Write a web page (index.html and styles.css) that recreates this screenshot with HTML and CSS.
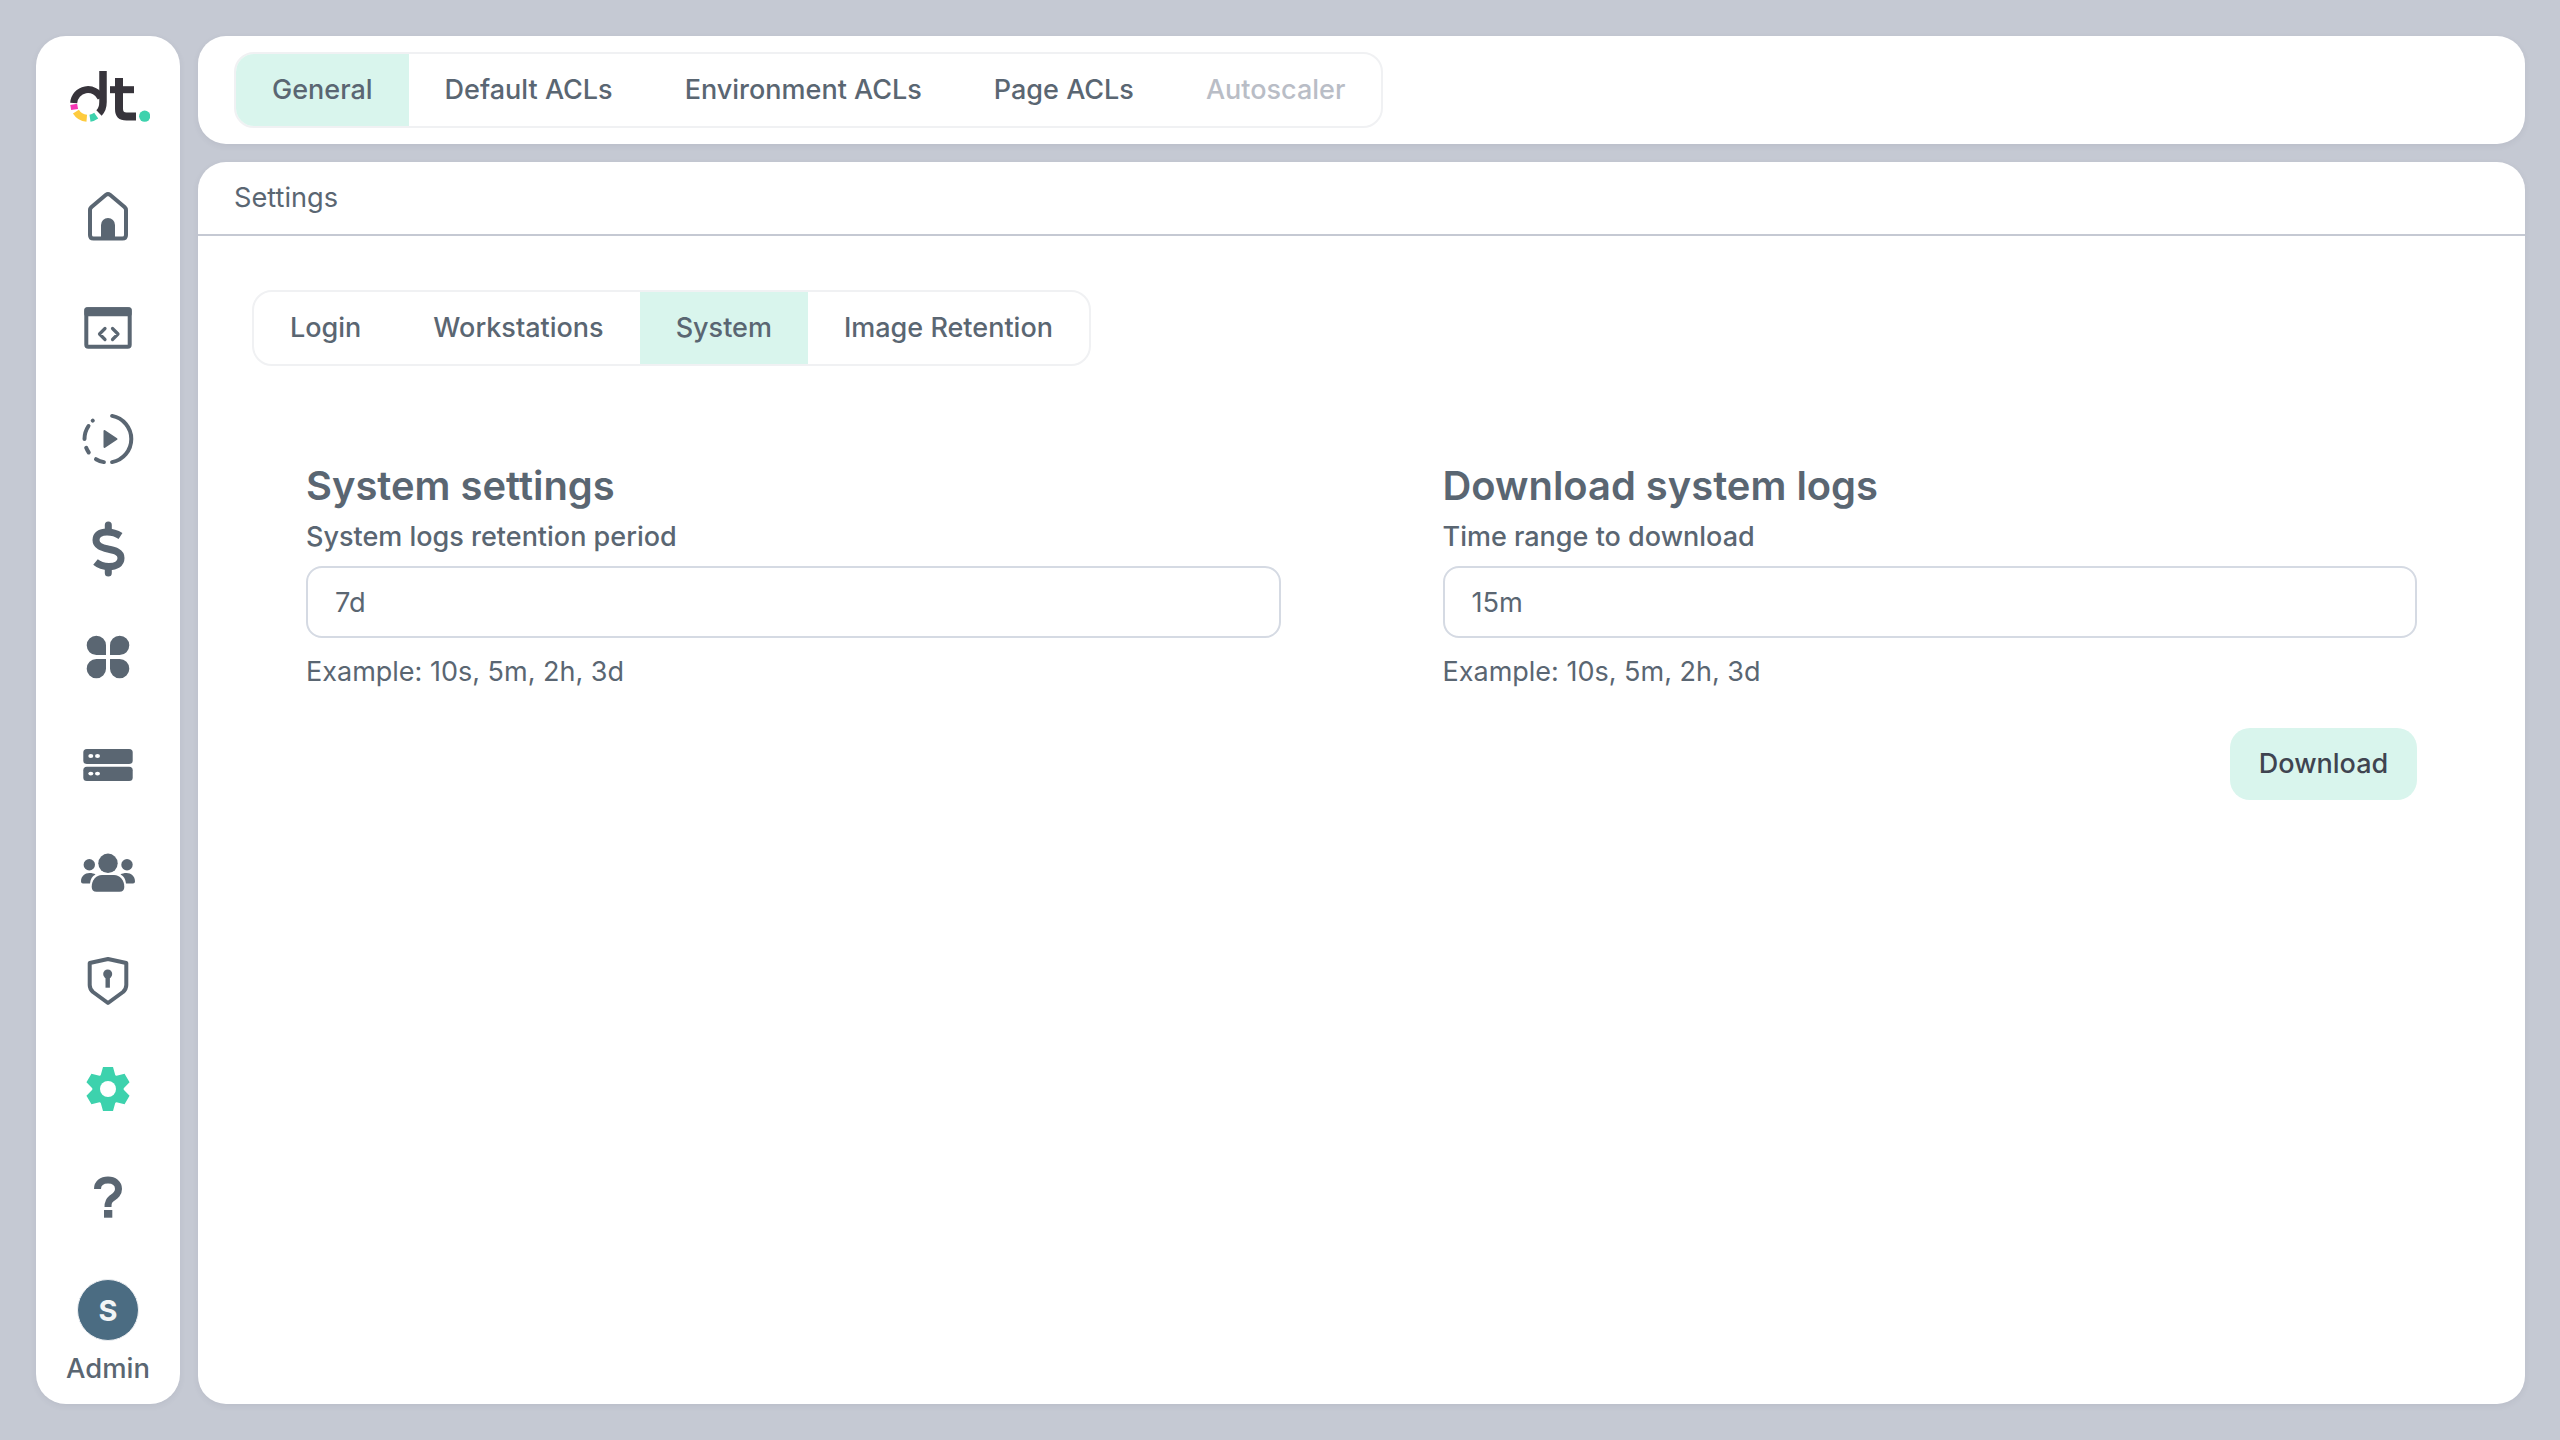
FILE: index.html
```
<!DOCTYPE html>
<html lang="en">
<head>
<meta charset="utf-8">
<title>Settings</title>
<link rel="stylesheet" href="styles.css">
</head>
<body>
<div class="app">
  <aside class="sidebar">
    <div class="logo">
      <svg width="84" height="60" viewBox="-2 0 84 60">
        <g fill="none" stroke-width="7">
          <path d="M5.700 35 A14.300 14.300 0 0 1 33 30" stroke="#37343b"/>
          <path d="M35 3 V34 Q35 41 31 45" stroke="#37343b" stroke-width="7.500"/>
          <path d="M5.700 36.300 L6.600 41.500" stroke="#f536b4"/>
          <path d="M7.900 43.600 A14.300 14.300 0 0 0 18.750 50.250" stroke="#fecb3e"/>
          <path d="M22 50.200 A14.300 14.300 0 0 0 28.200 47.700" stroke="#3dd2ad"/>
          <path d="M51 10 V41 Q51 48.500 58.500 48.500 H68" stroke="#37343b" stroke-width="8"/>
          <path d="M42 21.700 H66" stroke="#37343b"/>
        </g>
        <circle cx="76.700" cy="48.200" r="5.600" fill="#3dd2ad"/>
      </svg>
    </div>
    <nav class="nav">
      <a class="nav-item gap-4"><svg class="icon" viewBox="0 0 56 56"><path class="line" d="M10 22 Q10 20.500 11.500 19 L26 6.800 Q28 5.300 30 6.800 L44.500 19 Q46 20.500 46 22 V47 Q46 50.500 42.500 50.500 H13.500 Q10 50.500 10 47 Z"/><path class="solid" d="M21 50 V37 a7 7 0 0 1 14 0 V50 Z"/></svg></a>
      <a class="nav-item gap-3"><svg class="icon" viewBox="0 0 56 56"><rect class="line" x="6.300" y="9.300" width="43.400" height="37.400" rx="2"/><rect class="solid" x="4.300" y="7.300" width="47.400" height="9" rx="2.500"/><path class="line thin" d="M25 28.500 L19.500 34 L25 39.500 M32.500 28.500 L38 34 L32.500 39.500"/></svg></a>
      <a class="nav-item gap-2"><svg class="icon" viewBox="0 0 56 56"><path class="line round" d="M32.100 4.900 A23.500 23.500 0 0 1 32.100 51.100 M23.900 51.100 A23.500 23.500 0 0 1 16 48.200 M8.750 41.500 A23.500 23.500 0 0 1 6.200 36.800 M4.500 28 A23.500 23.500 0 0 1 8.500 15 M12.700 9.700 L12.800 9.600"/><path class="solid rounded" d="M24.500 20 L36.500 28 L24.500 36 Z"/></svg></a>
      <a class="nav-item"><svg class="icon" viewBox="0 0 56 56"><path class="line bold" d="M40.500 15 C36 12 31 11 27 11 C20 11 16 14 16 19 C16 25 22 26.500 28 28 C35 29.500 41 31 41 37 C41 43 36 45.500 29 45.500 C24 45.500 19 44 15.500 41"/><path class="line bold capround" d="M28.300 4 V10 M28.300 46 V52"/></svg></a>
      <a class="nav-item"><svg class="icon" viewBox="0 0 56 56"><path class="solid" d="M26 26 V16.350 A9.650 9.650 0 1 0 16.350 26 Z M30 26 H39.650 A9.650 9.650 0 1 0 30 16.350 Z M26 30 H16.350 A9.650 9.650 0 1 0 26 39.650 Z M30 30 V39.650 A9.650 9.650 0 1 0 39.650 30 Z"/></svg></a>
      <a class="nav-item"><svg class="icon" viewBox="0 0 56 56"><rect class="solid" x="3.300" y="12" width="49.400" height="15" rx="3.500"/><rect class="solid" x="3.300" y="29.700" width="49.400" height="14.300" rx="3.500"/><g class="holes"><ellipse cx="10.800" cy="19" rx="2.500" ry="1.900"/><ellipse cx="17.500" cy="19" rx="2.500" ry="1.900"/><ellipse cx="10.800" cy="36.600" rx="2.500" ry="1.900"/><ellipse cx="17.500" cy="36.600" rx="2.500" ry="1.900"/></g></svg></a>
      <a class="nav-item"><svg class="icon" viewBox="0 0 56 56"><g class="solid"><circle cx="28" cy="18.300" r="9.700"/><circle cx="9.300" cy="19.700" r="5.700"/><circle cx="47" cy="19.700" r="5.700"/><path d="M11.700 42 C11.700 35 16 30 22 30 H34 C40 30 44.300 35 44.300 42 Q44.300 46.700 39.500 46.700 H16.500 Q11.700 46.700 11.700 42 Z"/><path d="M1 36.500 C1 31 5 28 9.500 28 C12 28 14 28.500 15.500 29.500 C12 31.500 10.500 34 10 38.500 H3 Q1 38.500 1 36.500 Z"/><path d="M55 36.500 C55 31 51 28 46.500 28 C44 28 42 28.500 40.500 29.500 C44 31.500 45.500 34 46 38.500 H53 Q55 38.500 55 36.500 Z"/></g></svg></a>
      <a class="nav-item"><svg class="icon" viewBox="0 0 56 56"><path class="line" d="M9.700 10 L28 6 L46.300 10 V32 Q46.300 36 43 39 L28 50 L13 39 Q9.700 36 9.700 32 Z"/><circle class="solid" cx="27.700" cy="21" r="4.500"/><rect class="solid" x="25.500" y="22" width="4.400" height="12.700"/></svg></a>
      <a class="nav-item"><svg class="icon gear" viewBox="0 0 56 56"><circle cx="28" cy="28" r="15.500"/><path d="M23 6 H33 L35.500 15 H20.500 Z M23 50 H33 L35.500 41 H20.500 Z"/><path transform="rotate(60 28 28)" d="M23 6 H33 L35.500 15 H20.500 Z M23 50 H33 L35.500 41 H20.500 Z"/><path transform="rotate(120 28 28)" d="M23 6 H33 L35.500 15 H20.500 Z M23 50 H33 L35.500 41 H20.500 Z"/><circle class="gear-hole" cx="28" cy="28" r="8"/></svg></a>
      <a class="nav-item"><svg class="icon" viewBox="0 0 56 56"><path class="line bold" d="M17.500 20 C17.500 14 22 11 28 11 C34 11 38.500 14.500 38.500 20 C38.500 25 35 27 31.500 29.500 C29 31.500 28 33 28 38"/><rect class="solid" x="24" y="41" width="8.300" height="7.700"/></svg></a>
    </nav>
    <div class="user">
      <div class="avatar">S</div>
      <div class="user-name">Admin</div>
    </div>
  </aside>
  <div class="main">
    <header class="topbar">
      <div class="tabs">
        <a class="tab active">General</a>
        <a class="tab">Default ACLs</a>
        <a class="tab">Environment ACLs</a>
        <a class="tab">Page ACLs</a>
        <a class="tab disabled">Autoscaler</a>
      </div>
    </header>
    <section class="panel">
      <div class="panel-title">Settings</div>
      <div class="panel-body">
        <div class="tabs">
          <a class="tab">Login</a>
          <a class="tab">Workstations</a>
          <a class="tab active">System</a>
          <a class="tab">Image Retention</a>
        </div>
        <div class="columns">
          <div class="column">
            <h2 class="heading">System settings</h2>
            <label class="label">System logs retention period</label>
            <input class="input" type="text" value="7d">
            <p class="hint">Example: 10s, 5m, 2h, 3d</p>
          </div>
          <div class="column">
            <h2 class="heading">Download system logs</h2>
            <label class="label">Time range to download</label>
            <input class="input" type="text" value="15m">
            <p class="hint">Example: 10s, 5m, 2h, 3d</p>
            <button class="button" type="button">Download</button>
          </div>
        </div>
      </div>
    </section>
  </div>
</div>
</body>
</html>
```
FILE: styles.css
```
* {
  box-sizing: border-box;
}
html, body {
  margin: 0;
  height: 100%;
}
body {
  background: #c5c9d3;
  font-family: "Inter", "Liberation Sans", sans-serif;
  font-size: 27px;
  color: #5a6672;
}
.app {
  display: flex;
  gap: 18px;
  height: 100%;
  padding: 36px 35px 36px 36px;
}
.sidebar {
  flex: none;
  width: 144px;
  background: #fff;
  border-radius: 30px;
  box-shadow: 0 2px 6px rgba(60, 70, 90, 0.08);
  display: flex;
  flex-direction: column;
  align-items: center;
}
.logo {
  flex: none;
  height: 126px;
  padding-top: 32px;
  display: flex;
  justify-content: center;
}
.logo svg {
  display: block;
}
.nav {
  display: flex;
  flex-direction: column;
  align-items: center;
}
.nav-item {
  height: 108px;
  display: flex;
  align-items: center;
  justify-content: center;
}
.gap-4 {
  margin-bottom: 4px;
}
.gap-3 {
  margin-bottom: 3px;
}
.gap-2 {
  margin-bottom: 2px;
}
.icon {
  display: block;
  width: 56px;
  height: 56px;
}
.line {
  fill: none;
  stroke: #5a6672;
  stroke-width: 4;
  stroke-linejoin: round;
}
.line.thin {
  stroke-width: 3.2;
  stroke-linecap: round;
}
.line.round {
  stroke-linecap: round;
}
.line.bold {
  stroke-width: 7;
}
.line.capround {
  stroke-linecap: round;
}
.solid {
  fill: #5a6672;
}
.solid.rounded {
  stroke: #5a6672;
  stroke-width: 2;
  stroke-linejoin: round;
}
.holes {
  fill: #fff;
}
.gear {
  fill: #3dd2ad;
}
.gear-hole {
  fill: #fff;
}
.user {
  margin-top: auto;
  padding-bottom: 18px;
  display: flex;
  flex-direction: column;
  align-items: center;
  gap: 9px;
}
.avatar {
  width: 62px;
  height: 62px;
  border-radius: 50%;
  border: 1px solid #eef0f3;
  background: #4b6c82;
  color: #f1f4f6;
  font-size: 29px;
  font-weight: 700;
  display: flex;
  align-items: center;
  justify-content: center;
}
.user-name {
  font-size: 27.4px;
  font-weight: 500;
  line-height: 36px;
}
.main {
  flex: 1;
  min-width: 0;
  display: flex;
  flex-direction: column;
  gap: 18px;
}
.topbar {
  flex: none;
  height: 108px;
  background: #fff;
  border-radius: 28px;
  box-shadow: 0 2px 6px rgba(60, 70, 90, 0.08);
  padding: 16px 36px;
  display: flex;
  align-items: flex-start;
}
.tabs {
  display: inline-flex;
  border: 2px solid #f0f1f3;
  border-radius: 20px;
  overflow: hidden;
  background: #fff;
}
.tab {
  padding: 0 36px;
  height: 72px;
  line-height: 72px;
  font-weight: 500;
  white-space: nowrap;
}
.tab.active {
  background: #d9f5ed;
}
.tab.disabled {
  color: #b9bdc6;
}
.panel {
  flex: 1;
  min-height: 0;
  background: #fff;
  border-radius: 28px;
  box-shadow: 0 2px 6px rgba(60, 70, 90, 0.08);
  display: flex;
  flex-direction: column;
}
.panel-title {
  flex: none;
  height: 74px;
  line-height: 72px;
  padding-left: 36px;
  font-size: 27.2px;
  border-bottom: 2px solid #c5c9d3;
}
.panel-body {
  padding: 54px 108px 0 54px;
}
.columns {
  display: grid;
  grid-template-columns: 1fr 1fr;
  column-gap: 162px;
  margin-top: 97px;
  margin-left: 54px;
}
.column {
  display: flex;
  flex-direction: column;
  align-items: flex-start;
  min-width: 0;
}
.heading {
  margin: 0;
  font-size: 39.9px;
  font-weight: 600;
  line-height: 46px;
}
.label {
  margin-top: 9px;
  line-height: 38px;
  font-weight: 500;
}
.input {
  margin-top: 10px;
  width: 100%;
  height: 72px;
  padding: 0 27px;
  border: 2px solid #d5dae3;
  border-radius: 16px;
  background: #fff;
  color: #5a6672;
  font-family: inherit;
  font-size: 27.2px;
  outline: none;
}
.hint {
  margin: 16px 0 0;
  line-height: 36px;
}
.button {
  align-self: flex-end;
  margin-top: 38px;
  width: 187px;
  height: 72px;
  padding: 0 0 2px;
  border: 0;
  border-radius: 20px;
  background: #d9f5ed;
  color: #3f4450;
  font-family: inherit;
  font-size: 27px;
  font-weight: 500;
}
```
